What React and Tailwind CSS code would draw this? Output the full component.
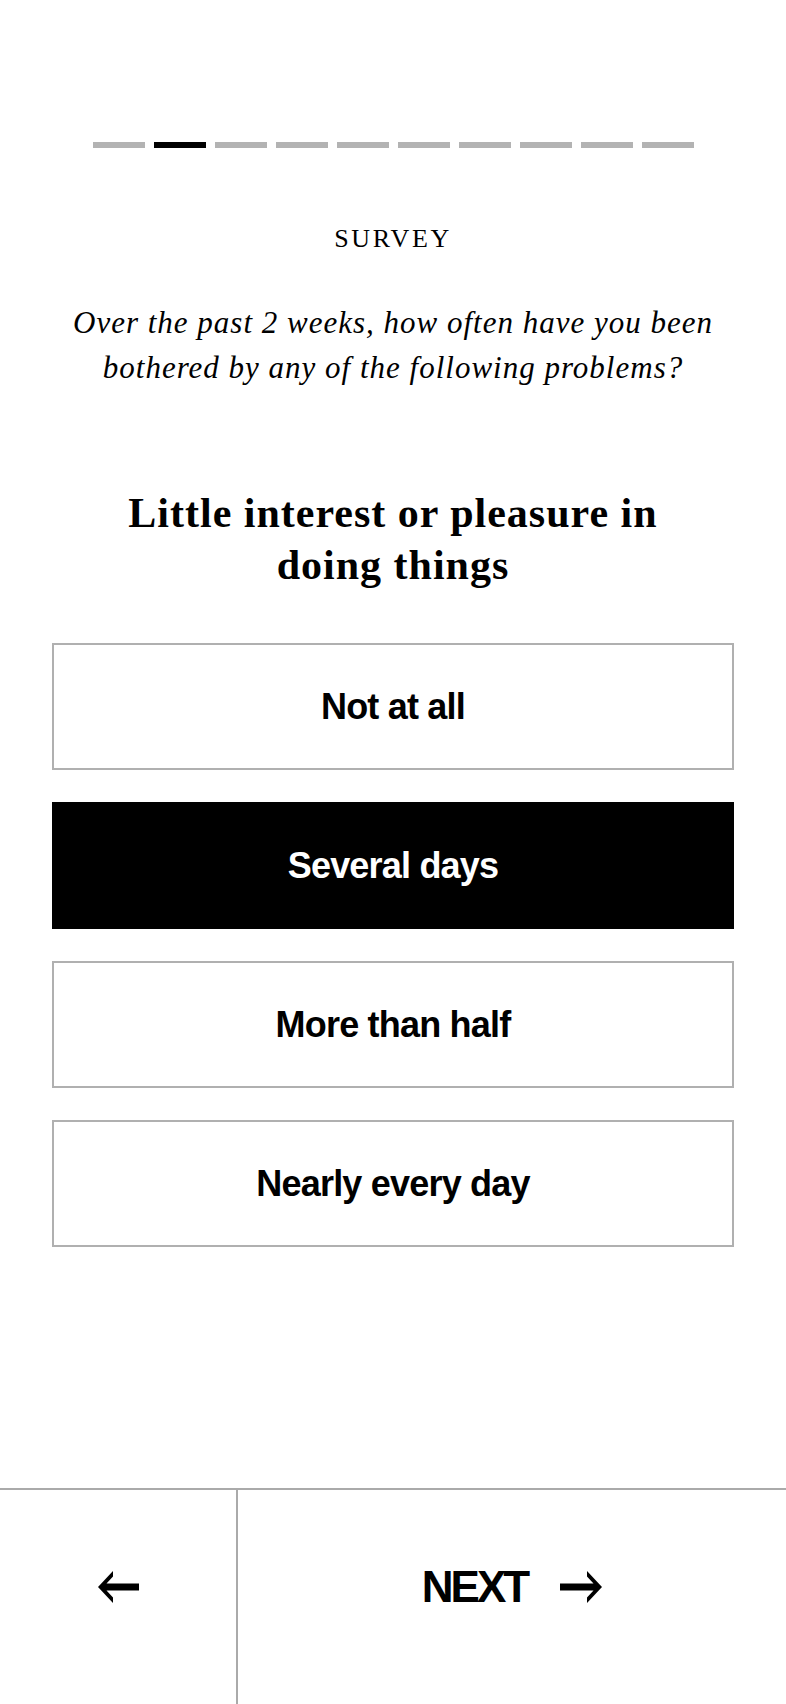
import React, { useState } from 'react';

const options = ['Not at all', 'Several days', 'More than half', 'Nearly every day'];

const ArrowLeft = () => (
  <svg width="41" height="32" viewBox="0 0 41 32" fill="currentColor">
    <path d="M0 16 L15 0 V5.5 L8.5 12.5 H41 V19.5 H8.5 L15 26.5 V32 Z" />
  </svg>
);

const ArrowRight = () => (
  <svg width="42" height="32" viewBox="0 0 42 32" fill="currentColor">
    <path d="M42 16 L27 0 V5.5 L33.5 12.5 H0 V19.5 H33.5 L27 26.5 V32 Z" />
  </svg>
);

const App = () => {
  const [selected, setSelected] = useState(1);
  const step = 1;

  return (
    <div className="flex h-[1704px] flex-col bg-white text-black">
      <div className="flex justify-center gap-[9px] pt-[142px]">
        {Array.from({ length: 10 }).map((_, i) => (
          <div
            key={i}
            className={i === step ? 'h-[6px] w-[52px] bg-black' : 'h-[6px] w-[52px] bg-[#b3b3b3]'}
          />
        ))}
      </div>

      <p className="mt-[78px] text-center font-['Liberation_Serif',serif] text-[26px] leading-[26px] tracking-[0.1em]">
        SURVEY
      </p>

      <p className="mx-auto mt-[48px] w-[660px] text-center font-['Liberation_Serif',serif] text-[31px] italic leading-[45px] tracking-[1px]">
        Over the past 2 weeks, how often have you been bothered by any of the following problems?
      </p>

      <h1 className="mx-auto mt-[97px] w-[560px] text-center font-['Liberation_Serif',serif] text-[42px] font-bold leading-[52px] tracking-[1px]">
        Little interest or pleasure in doing things
      </h1>

      <div className="mt-[52px] flex flex-col gap-[32px] px-[52px]">
        {options.map((label, i) => (
          <button
            key={label}
            onClick={() => setSelected(i)}
            className={
              i === selected
                ? "flex h-[127px] items-center justify-center border-2 border-black bg-black font-['Liberation_Sans',sans-serif] text-[36px] font-bold leading-[36px] tracking-[-0.8px] text-white"
                : "flex h-[127px] items-center justify-center border-2 border-[#b0b0b0] bg-white font-['Liberation_Sans',sans-serif] text-[36px] font-bold leading-[36px] tracking-[-0.8px] text-black"
            }
          >
            {label}
          </button>
        ))}
      </div>

      <div className="mt-auto flex h-[216px] border-t-2 border-[#aaaaaa]">
        <button className="flex w-[238px] items-center justify-center border-r-2 border-[#aaaaaa] pb-[20px]">
          <ArrowLeft />
        </button>
        <button className="flex flex-1 items-center justify-center gap-[33px] pb-[20px]">
          <span className="font-['Liberation_Sans',sans-serif] text-[44px] font-bold leading-[44px] tracking-[-3px]">
            NEXT
          </span>
          <ArrowRight />
        </button>
      </div>
    </div>
  );
};

export default App;
